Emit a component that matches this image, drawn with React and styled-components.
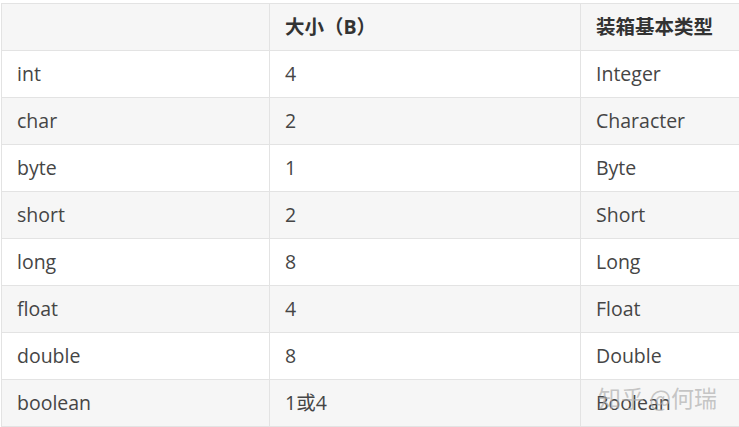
import React from 'react';
import styled, { createGlobalStyle } from 'styled-components';

const Global = createGlobalStyle`
  html, body {
    margin: 0;
    padding: 0;
    background: #fff;
    overflow: hidden;
  }
`;

const Page = styled.div`
  position: relative;
  width: 739px;
  height: 427px;
  overflow: hidden;
  padding: 3px 0 0 1px;
  box-sizing: border-box;
`;

const Table = styled.table`
  border-collapse: collapse;
  table-layout: fixed;
  width: 900px;
  font-family: 'Open Sans', 'Noto Sans CJK SC', sans-serif;
  font-size: 19.5px;
  color: #454545;
`;

const Row = styled.tr`
  height: 47px;
  background: ${props => (props.$shade ? '#f6f6f6' : '#fff')};
`;

const Cell = styled.td`
  border: 1px solid #e3e3e3;
  padding: 0 15px;
  vertical-align: middle;
  white-space: nowrap;
  line-height: 1;
`;

const HeadCell = styled(Cell).attrs({ as: 'th' })`
  text-align: left;
  font-weight: 700;
  color: #333;
`;

const Watermark = styled.div`
  position: absolute;
  left: 598px;
  top: 380px;
  font-family: 'Noto Sans CJK SC', sans-serif;
  font-size: 23px;
  color: rgba(175, 175, 175, 0.7);
  pointer-events: none;
`;

const rows = [
  ['int', '4', 'Integer'],
  ['char', '2', 'Character'],
  ['byte', '1', 'Byte'],
  ['short', '2', 'Short'],
  ['long', '8', 'Long'],
  ['float', '4', 'Float'],
  ['double', '8', 'Double'],
  ['boolean', '1或4', 'Boolean'],
];

const App = () => (
  <Page>
    <Global />
    <Table>
      <colgroup>
        <col style={{ width: 268 }} />
        <col style={{ width: 311 }} />
        <col />
      </colgroup>
      <thead>
        <Row $shade>
          <HeadCell></HeadCell>
          <HeadCell>大小（B）</HeadCell>
          <HeadCell>装箱基本类型</HeadCell>
        </Row>
      </thead>
      <tbody>
        {rows.map((r, i) => (
          <Row key={r[0]} $shade={i % 2 === 1}>
            <Cell>{r[0]}</Cell>
            <Cell>{r[1]}</Cell>
            <Cell>{r[2]}</Cell>
          </Row>
        ))}
      </tbody>
    </Table>
    <Watermark>知乎 @何瑞</Watermark>
  </Page>
);

export default App;
